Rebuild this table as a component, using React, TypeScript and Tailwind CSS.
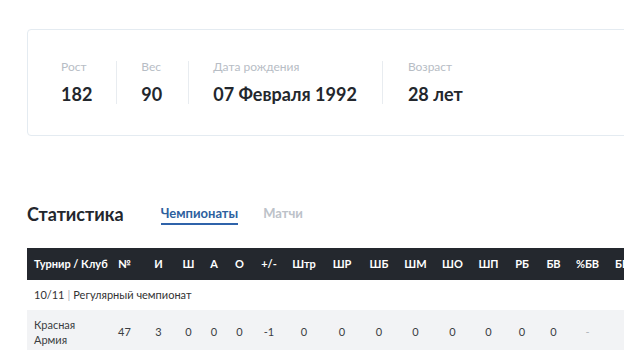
import React from 'react'

const cols = 'grid grid-cols-[80px_35px_33px_27px_24px_27px_32px_38px_38px_36px_37px_37px_35px_32px_31px_37px_32px]'

const heads = ['№', 'И', 'Ш', 'А', 'О', '+/-', 'Штр', 'ШР', 'ШБ', 'ШМ', 'ШО', 'ШП', 'РБ', 'БВ', '%БВ', 'ББ']
const row = ['47', '3', '0', '0', '0', '-1', '0', '0', '0', '0', '0', '0', '0', '0', '-', '']

const facts = [
  { label: 'Рост', value: '182', cls: 'pr-[24px] border-r border-[#e8ecf0]' },
  { label: 'Вес', value: '90', cls: 'pl-[24px] pr-[26px] border-r border-[#e8ecf0]' },
  { label: 'Дата рождения', value: '07 Февраля 1992', cls: 'pl-[24px] pr-[25px] border-r border-[#e8ecf0]' },
  { label: 'Возраст', value: '28 лет', cls: 'pl-[25px]' },
]

export default function App() {
  return (
    <div className="w-[624px] h-[350px] overflow-hidden bg-white font-['Lato','Liberation_Sans',sans-serif]">
      <div className="w-[760px] pl-[27px] pt-[29px]">
        {/* player facts */}
        <div className="flex border border-[#e4ebf1] rounded-[4px] py-[31px] pl-[33px]">
          {facts.map((f) => (
            <div key={f.label} className={f.cls}>
              <div className="text-[12px] leading-[12px] text-[#b7bdc5]">{f.label}</div>
              <div className="mt-[11px] text-[18px] leading-[20px] font-bold text-[#23272d] whitespace-nowrap">{f.value}</div>
            </div>
          ))}
        </div>

        {/* stats heading + tabs */}
        <div className="mt-[66px] flex items-start">
          <h2 className="text-[18px] leading-[24px] font-bold text-[#23272d]">Статистика</h2>
          <div className="ml-[37px] mt-[3px] flex gap-[25px]">
            <div className="text-[13px] leading-[16px] font-bold text-[#2d5f9e] pb-[2px] border-b-2 border-[#2f63aa]">Чемпионаты</div>
            <div className="text-[13px] leading-[16px] font-bold text-[#bcc2c9]">Матчи</div>
          </div>
        </div>

        {/* table */}
        <div className="mt-[22px] text-[11px]">
          <div className={`${cols} h-[32px] items-center bg-[#24282e] text-white font-bold whitespace-nowrap`}>
            <div className="pl-[7px]">Турнир / Клуб</div>
            {heads.map((h) => (
              <div key={h} className="text-center">{h}</div>
            ))}
          </div>

          <div className="h-[30px] flex items-center pl-[7px] text-[#333]">
            10/11 <span className="mx-[3px] text-[#aab0b7]">|</span> Регулярный чемпионат
          </div>

          <div className={`${cols} items-center bg-[#f2f3f5] py-[7px] text-[#3a3d42]`}>
            <div className="pl-[7px] leading-[15px]">
              Красная<br />Армия
            </div>
            {row.map((v, i) => (
              <div key={i} className={v === '-' ? 'text-center text-[#b0b5bb]' : 'text-center'}>{v}</div>
            ))}
          </div>
        </div>
      </div>
    </div>
  )
}
